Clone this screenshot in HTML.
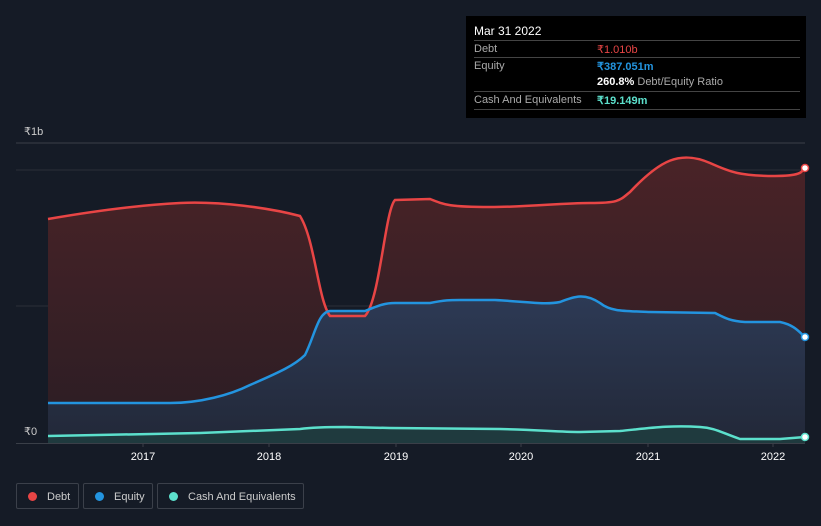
<!DOCTYPE html>
<html><head><meta charset="utf-8"><style>
body{margin:0;width:821px;height:526px;background:#151b26;font-family:"Liberation Sans",sans-serif;overflow:hidden;position:relative}
.tt{position:absolute;left:466px;top:16px;width:340px;height:102px;background:#000;color:#fff;font-size:11px}
.tt .row{position:absolute;left:8px;width:326px;border-top:1px solid #444;height:17px}
.tt span{position:absolute;top:2px}
.leg{position:absolute;top:483px;height:26px;border:1px solid #3b404a;border-radius:2px;color:#ccc;font-size:11px;line-height:26px;box-sizing:border-box}
.leg i{display:inline-block;width:9px;height:9px;border-radius:50%;margin:0 10px 0 11px;vertical-align:-1px}
</style></head><body>
<svg width="821" height="526" style="position:absolute;left:0;top:0">
<defs>
<linearGradient id="gd" x1="0" y1="0" x2="0" y2="1"><stop offset="0" stop-color="#4a2327"/><stop offset="1" stop-color="#2a1d24"/></linearGradient>
<linearGradient id="ge" x1="0" y1="0" x2="0" y2="1"><stop offset="0" stop-color="#2d3a55"/><stop offset="1" stop-color="#222838"/></linearGradient>
</defs>
<line x1="16" y1="143" x2="805" y2="143" stroke="#3a3f48"/>
<line x1="16" y1="170" x2="805" y2="170" stroke="#2a2f38"/>
<line x1="16" y1="306" x2="805" y2="306" stroke="#2a2f38"/>
<path d="M48,219 C100,210 140,205 180,203 S270,208 300,216 C315,240 318,300 330,316 L365,316 C380,300 385,210 395,200 L430,199 C445,205 450,207 490,207 S560,203 590,203 S620,200 630,192 C660,160 680,150 710,163 C730,172 740,176 775,176 S800,168 805,168 L805,443 L48,443Z" fill="url(#gd)"/>
<path d="M48,403 L170,403 C200,403 230,395 250,385 C280,372 295,365 305,355 C315,335 318,312 330,311 L365,311 C380,305 385,303 395,303 L430,303 C445,300 450,300 460,300 L495,300 C530,302 545,305 560,302 C575,296 585,293 600,303 C610,311 620,311 650,312 L715,313 C725,318 730,321 745,322 L780,322 C795,325 800,333 805,337 L805,443 L48,443Z" fill="url(#ge)"/>
<path d="M48,436 L200,433 L300,429 C315,427 330,427 345,427 L390,428 L500,429 C540,430 560,432 580,432 L620,431 C650,428 670,425 700,427 C715,428 720,432 740,439 L780,439 L805,437 L805,443 L48,443Z" fill="#1f3a3e"/>
<path d="M48,219 C100,210 140,205 180,203 S270,208 300,216 C315,240 318,300 330,316 L365,316 C380,300 385,210 395,200 L430,199 C445,205 450,207 490,207 S560,203 590,203 S620,200 630,192 C660,160 680,150 710,163 C730,172 740,176 775,176 S800,168 805,168" fill="none" stroke="#e84545" stroke-width="2.5"/>
<path d="M48,403 L170,403 C200,403 230,395 250,385 C280,372 295,365 305,355 C315,335 318,312 330,311 L365,311 C380,305 385,303 395,303 L430,303 C445,300 450,300 460,300 L495,300 C530,302 545,305 560,302 C575,296 585,293 600,303 C610,311 620,311 650,312 L715,313 C725,318 730,321 745,322 L780,322 C795,325 800,333 805,337" fill="none" stroke="#2394df" stroke-width="2.5"/>
<path d="M48,436 L200,433 L300,429 C315,427 330,427 345,427 L390,428 L500,429 C540,430 560,432 580,432 L620,431 C650,428 670,425 700,427 C715,428 720,432 740,439 L780,439 L805,437" fill="none" stroke="#5ce0cc" stroke-width="2.5"/>
<circle cx="805" cy="168" r="3.5" fill="#fff" stroke="#e84545" stroke-width="1.5"/>
<circle cx="805" cy="337" r="3.5" fill="#fff" stroke="#2394df" stroke-width="1.5"/>
<circle cx="805" cy="437" r="3.5" fill="#fff" stroke="#5ce0cc" stroke-width="1.5"/>
<rect x="16" y="423" width="32" height="20" fill="#151b26"/>
<line x1="16" y1="443.5" x2="805" y2="443.5" stroke="#3a3f48"/>
<g stroke="#3a3f48"><line x1="143" y1="443" x2="143" y2="447"/><line x1="269" y1="443" x2="269" y2="447"/><line x1="396" y1="443" x2="396" y2="447"/><line x1="521" y1="443" x2="521" y2="447"/><line x1="648" y1="443" x2="648" y2="447"/><line x1="773" y1="443" x2="773" y2="447"/></g>
<g fill="#fff" font-size="11" text-anchor="middle" font-family="Liberation Sans,sans-serif"><text x="143" y="460">2017</text><text x="269" y="460">2018</text><text x="396" y="460">2019</text><text x="521" y="460">2020</text><text x="648" y="460">2021</text><text x="773" y="460">2022</text></g>
<g fill="#ccc" font-size="11" font-family="Liberation Sans,sans-serif"><text x="24" y="135">₹1b</text><text x="24" y="435">₹0</text></g>
</svg>
<div class="tt">
<span style="left:8px;top:8px;font-size:12px;position:absolute">Mar 31 2022</span>
<div class="row" style="top:24px"><span style="color:#aaa">Debt</span><span style="left:123px;color:#e84545">₹1.010b</span></div>
<div class="row" style="top:41px"><span style="color:#aaa">Equity</span><span style="left:123px;color:#2394df;font-weight:bold">₹387.051m</span></div>
<div class="row" style="top:58px;border-top:none"><span style="left:123px"><b>260.8%</b> <span style="position:static;color:#aaa">Debt/Equity Ratio</span></span></div>
<div class="row" style="top:75px"><span style="color:#aaa">Cash And Equivalents</span><span style="left:123px;color:#5ce0cc;font-weight:bold">₹19.149m</span></div>
<div class="row" style="top:93px;height:0"></div>
</div>
<div class="leg" style="left:16px;width:63px"><i style="background:#e84545"></i>Debt</div>
<div class="leg" style="left:83px;width:70px"><i style="background:#2394df"></i>Equity</div>
<div class="leg" style="left:157px;width:147px"><i style="background:#5ce0cc"></i>Cash And Equivalents</div>
</body></html>
